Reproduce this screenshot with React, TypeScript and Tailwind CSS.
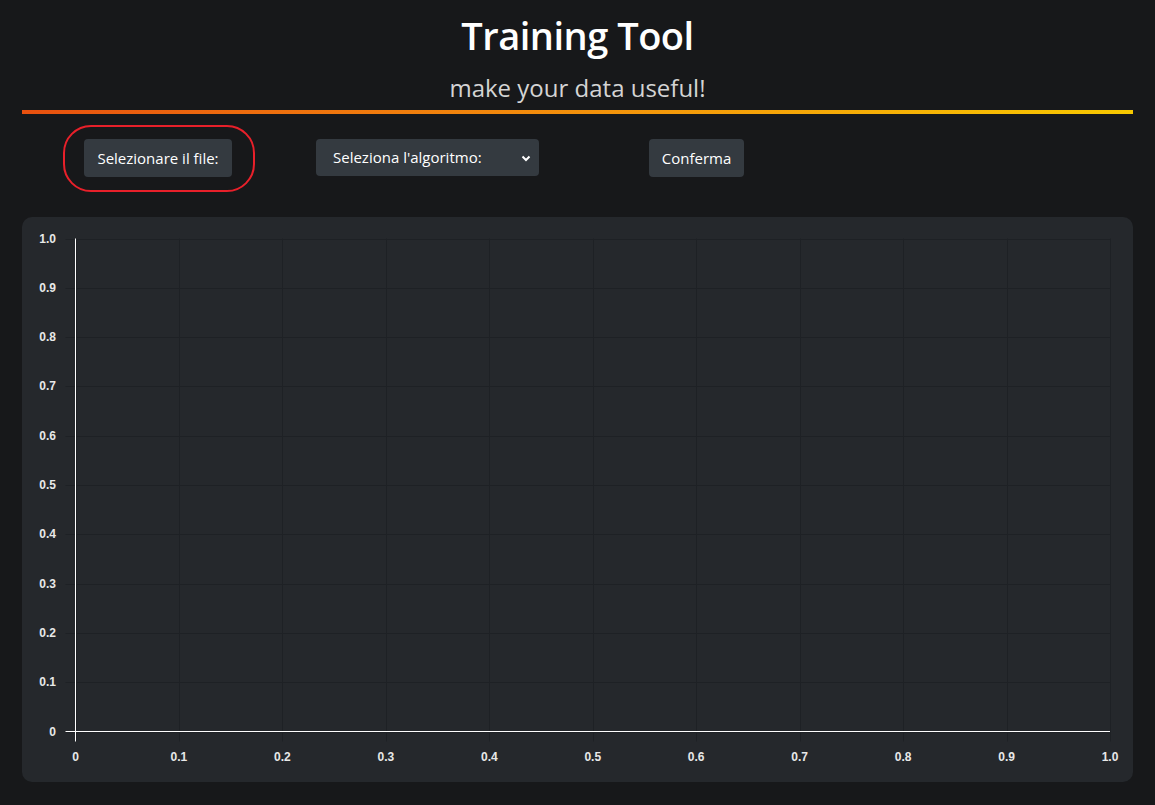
import React from "react";

const xs = [0, 0.1, 0.2, 0.3, 0.4, 0.5, 0.6, 0.7, 0.8, 0.9, 1.0];

function Chart() {
  const left = 53.5;
  const right = 1088;
  const top = 21.5;
  const bottom = 514.5;
  const w = right - left;
  const h = bottom - top;
  const fmt = (v: number, i: number) => (i === 0 ? "0" : v.toFixed(1));
  return (
    <svg width="1110" height="565" className="block">
      {xs.map((v, i) => {
        const x = Math.round(left + (w * i) / 10) + 0.5;
        return (
          <line key={"vx" + i} x1={x} y1={top} x2={x} y2={bottom + 10} stroke="#1e2125" strokeWidth={1} />
        );
      })}
      {xs.map((v, i) => {
        const y = Math.round(bottom - (h * i) / 10) + 0.5;
        return (
          <line key={"hy" + i} x1={left - 10} y1={y} x2={right} y2={y} stroke="#1e2125" strokeWidth={1} />
        );
      })}
      <line x1={left} y1={top} x2={left} y2={bottom + 10} stroke="#ffffff" strokeWidth={1} />
      <line x1={left - 10} y1={bottom} x2={right} y2={bottom} stroke="#ffffff" strokeWidth={1} />
      {xs.map((v, i) => {
        const y = bottom - (h * i) / 10;
        return (
          <text
            key={"ly" + i}
            x={34}
            y={y + 4}
            textAnchor="end"
            fill="#e8e8e8"
            fontFamily="'Liberation Sans', Arial, sans-serif"
            fontWeight="bold"
            fontSize="12"
          >
            {fmt(v, i)}
          </text>
        );
      })}
      {xs.map((v, i) => {
        const x = left + (w * i) / 10;
        return (
          <text
            key={"lx" + i}
            x={x}
            y={544}
            textAnchor="middle"
            fill="#e8e8e8"
            fontFamily="'Liberation Sans', Arial, sans-serif"
            fontWeight="bold"
            fontSize="12"
          >
            {fmt(v, i)}
          </text>
        );
      })}
    </svg>
  );
}

export default function App() {
  return (
    <div
      className="min-h-[805px] w-full bg-[#17181a] text-white"
      style={{ fontFamily: "'Open Sans', 'Noto Sans', sans-serif" }}
    >
      <div className="flex flex-col items-center pt-[10px]">
        <h1 className="text-[38px] font-semibold leading-[50px] tracking-[-0.5px]">Training Tool</h1>
        <p className="mt-[12px] text-[24px] leading-[32px] text-[#d4d4d4]">make your data useful!</p>
      </div>
      <div className="mx-[22px] mt-[6px] h-[4px] bg-gradient-to-r from-[#e8500f] to-[#f7c800]" />
      <div className="flex items-start pt-[25px] pl-[84px]">
        <div className="relative">
          <div className="absolute left-[-21px] top-[-14px] h-[67px] w-[192px] rounded-[28px] border-2 border-[#e8202a]" />
          <button className="h-[38px] w-[148px] rounded-[4px] bg-[#343a40] text-[15px] text-white">
            Selezionare il file:
          </button>
        </div>
        <div className="ml-[84px] flex h-[37px] w-[223px] items-center justify-between rounded-[4px] bg-[#343a40] pl-[17px] pr-[8px] text-[15px]">
          <span>Seleziona l'algoritmo:</span>
          <svg width="10" height="8" viewBox="0 0 10 8">
            <path d="M1.5 2.5 L5 6 L8.5 2.5" fill="none" stroke="#ffffff" strokeWidth="2" />
          </svg>
        </div>
        <button className="ml-[110px] h-[38px] w-[95px] rounded-[4px] bg-[#343a40] text-[15px] text-white">
          Conferma
        </button>
      </div>
      <div className="mx-[22px] mt-[40px] h-[565px] rounded-[10px] bg-[#25282c]">
        <Chart />
      </div>
    </div>
  );
}
